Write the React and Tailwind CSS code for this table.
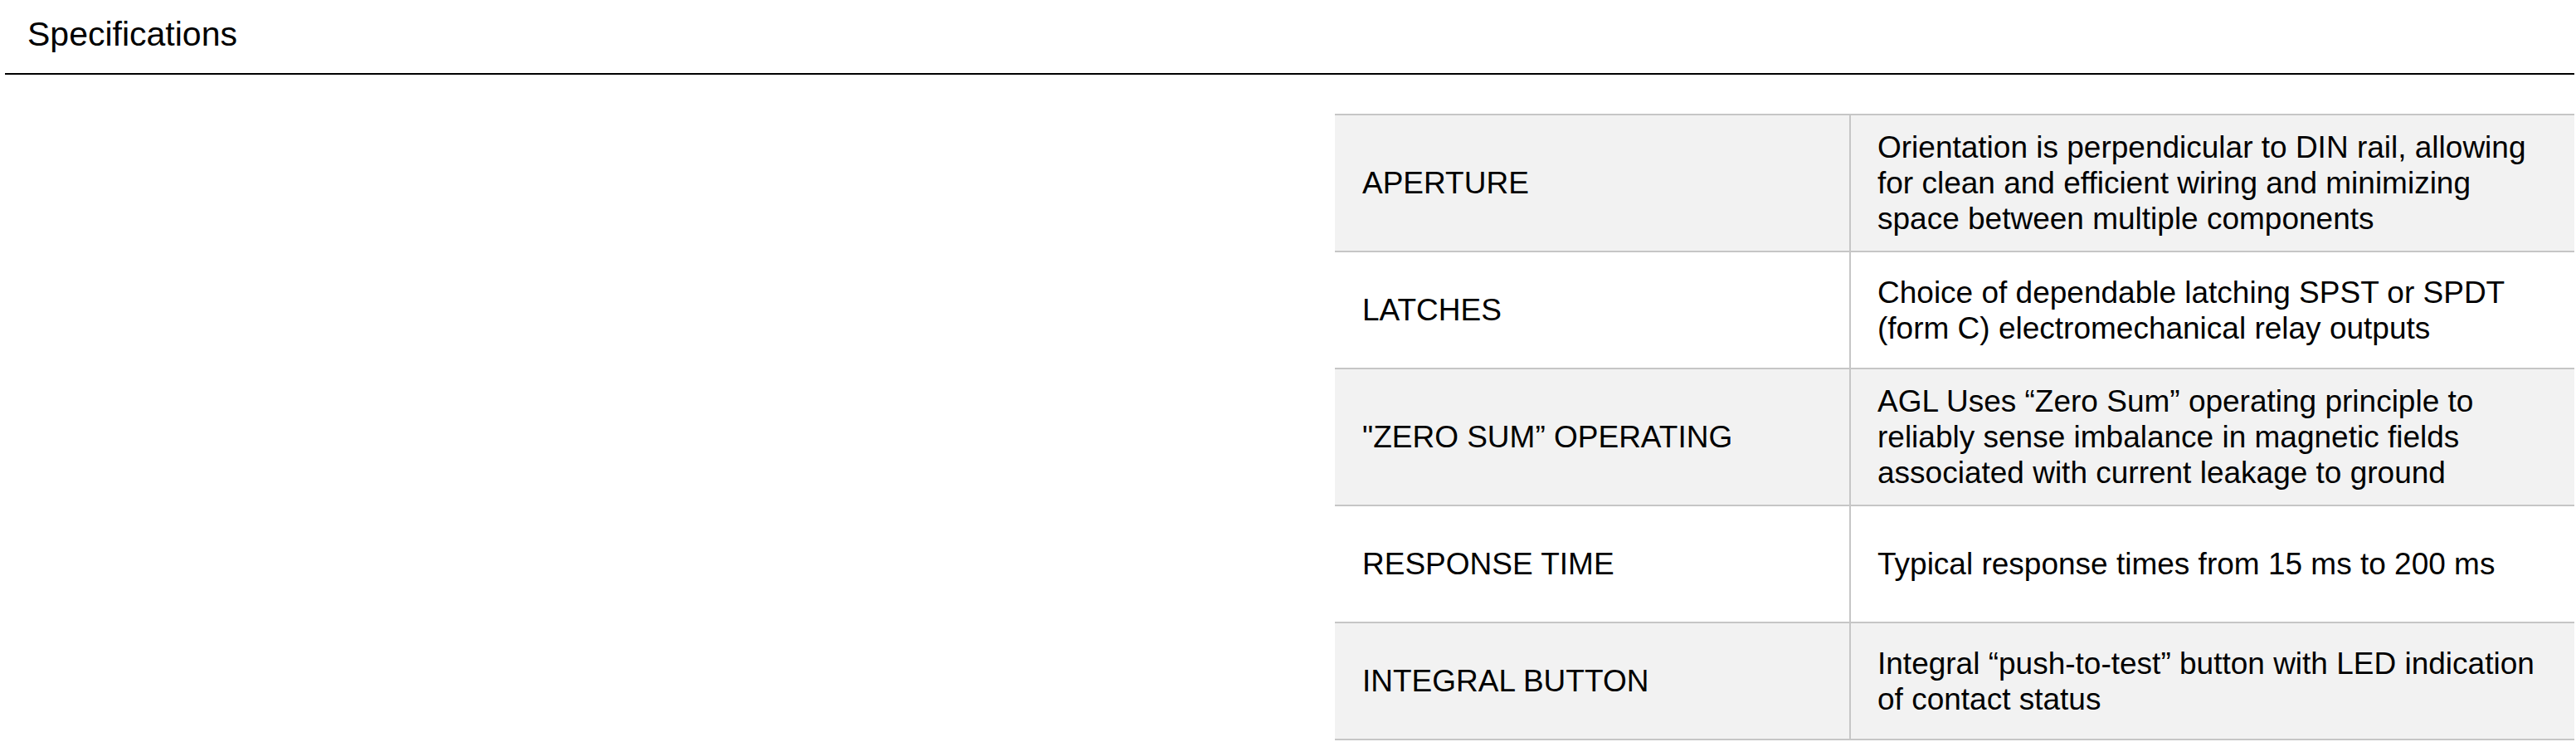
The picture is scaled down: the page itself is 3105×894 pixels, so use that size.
import React from "react";

const rows = [
  {
    k: "APERTURE",
    v: "Orientation is perpendicular to DIN rail, allowing for clean and efficient wiring and minimizing space between multiple components",
  },
  {
    k: "LATCHES",
    v: "Choice of dependable latching SPST or SPDT (form C) electromechanical relay outputs",
  },
  {
    k: "\"ZERO SUM\u201D OPERATING",
    v: "AGL Uses \u201CZero Sum\u201D operating principle to reliably sense imbalance in magnetic fields associated with current leakage to ground",
  },
  {
    k: "RESPONSE TIME",
    v: "Typical response times from 15 ms to 200 ms",
  },
  {
    k: "INTEGRAL BUTTON",
    v: "Integral \u201Cpush-to-test\u201D button with LED indication of contact status",
  },
];

export default function App() {
  return (
    <div
      className="bg-white text-black pl-[6px] pr-[2px] pt-[18px] min-h-[894px]"
      style={{ fontFamily: '"Liberation Sans", Arial, sans-serif' }}
    >
      <div className="border-b-2 border-black pl-[27px] pb-[23px]">
        <h2 className="text-[41px] leading-[47px] font-normal">Specifications</h2>
      </div>
      <div className="mt-[47px] flex justify-end">
        <div className="w-[1494px] border-b-2 border-[#c6c6c6]">
          {rows.map((r, i) => (
            <div
              key={i}
              className={
                "grid grid-cols-[622px_1fr] border-t-2 border-[#c6c6c6] min-h-[141px] " +
                (i % 2 === 0 ? "bg-[#f2f2f2]" : "bg-white")
              }
            >
              <div className="flex items-center border-r-2 border-[#c6c6c6] px-[33px] py-[17px] text-[37px] leading-[43px]">
                {r.k}
              </div>
              <div className="flex items-center pl-[32px] pr-[32px] py-[17px] text-[37px] leading-[43px]">
                {r.v}
              </div>
            </div>
          ))}
        </div>
      </div>
    </div>
  );
}
